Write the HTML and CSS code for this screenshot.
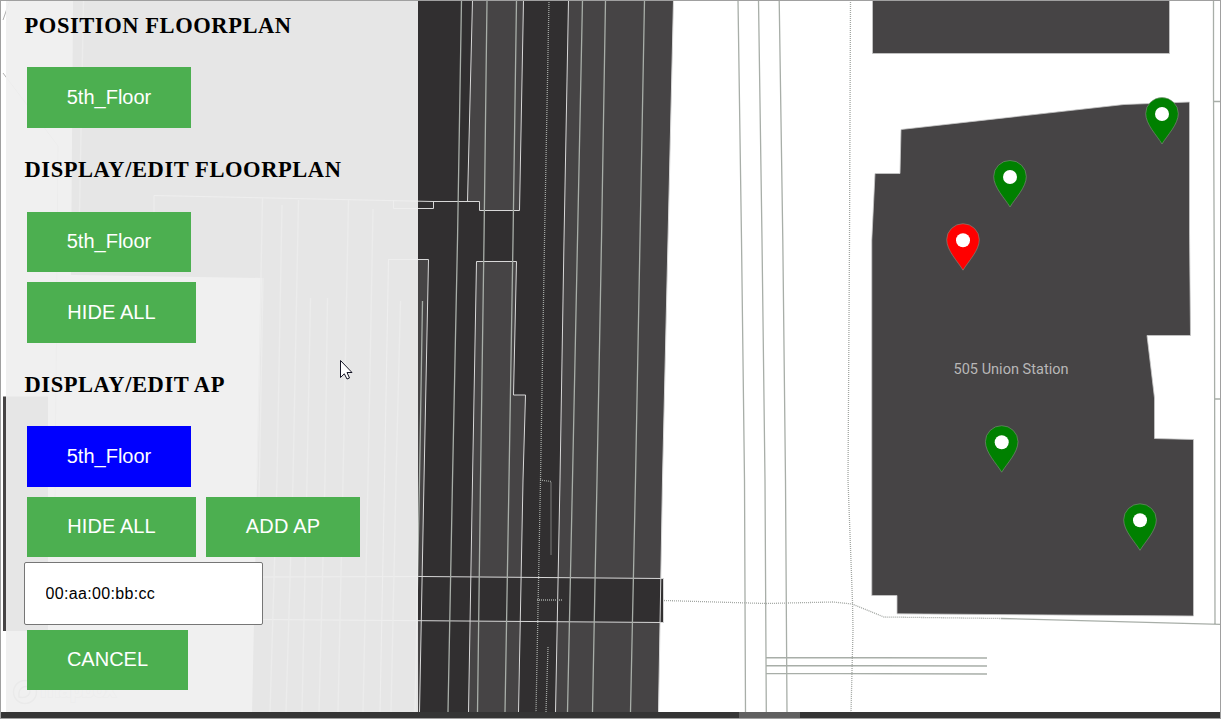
FILE: index.html
```
<!DOCTYPE html>
<html lang="en">
<head>
<meta charset="utf-8">
<title>Floorplan editor</title>
<link rel="stylesheet" href="styles.css">
</head>
<body>
<main class="window">
<svg class="map" viewBox="0 0 1221 719" width="1221" height="719">
  <defs>
    <g id="pin"><path d="M0 46.5C-5 38-16.300 27-16.300 16A16.300 16 0 0 1 16.300 16C16.300 27 5 38 0 46.5Z" stroke="#83917f" stroke-width=".6"/><circle cy="16.5" r="7" fill="#fff"/></g>
  </defs>
  <path class="block" d="M73 0H673.5L668 240L662.5 480L658.5 712H252L257 480L262 278L71 275Z"/>
  <path class="block" d="M3 396.5H48V631H3Z"/>
  <g class="dark">
    <path d="M418 0H472.5L467.5 201.5H479.5V210H519L523.5 0H568.5L564 240L560 480L555.5 712H518L523 480L525.5 395H513.5L516.500 261.500H476.500L473 480L468.500 712H419L424 480L428.500 259.500H418Z"/>
    <path d="M418 577L663.500 578.500V622.500L418 620.500Z"/>
  </g>
  <g class="edges">
    <path d="M472.500 0L467.500 201.500M523.500 0L519.500 210.500H479.500V201.500L433 201.500L154 195.500V220M433.500 201V208.500L393.500 208.500V200M568.500 0L564 240L560 480L555.500 712M388 259.500H428.500L424 480L419.500 712M388.500 259.500L384.500 480L380 712M476.500 261.500H516.500L513.500 395H525.500L523 480L518.500 712M476.500 261.500L472.500 480L468.500 712"/>
    <path d="M673.500 0L668 240L662.500 480L658.500 712M262 577L420 576.500L663.500 578.500V622.500L262 619.500"/>
  </g>
  <g class="rails">
    <path d="M461.500 0L457.500 240L452.500 480L448 712M487 0L484 240L480.500 480L477.500 712M516.500 0L513 240L509 480L505 712M582.500 0L577.500 240L572.500 480L567.500 712M605.500 0L601.500 240L597 480L592.500 712M644.500 0L640 240L635.500 480L630.500 712M422.500 301L419.500 480L415 712"/>
    <path d="M83.500 0L79.500 212M263 278L259 500M262.500 198L257 480M282 205L277 480L270 712M298.500 200L293 480L286 712M348.500 200L343 480L338 712M373 209L368 480L363 712M310.500 298L307 480L302 712M327.500 298L325 480L319 712M400.500 301L396 480L391 712"/>
    <path d="M738 0L741.500 240L744.500 480L745.500 712M758.500 0L762 240L765 480L766.300 712M779.200 0L782.800 240L785.500 480L787 712M766 657.500L987 658M766 665.500L987 666M766 673.300L987 674M1213.500 0V90L1214.500 320L1215 624M1214 101.500H1221M1215 399H1221M1001 618.500L1221 624.300"/>
  </g>
  <path class="walk" d="M3 20L10 0M3 73L58 146L55 500"/>
  <path class="paths" d="M549 0L544.500 240L540.500 480L536 712M540 480L551 481.500V555M537 600H563M548 647L546 712M850.500 0L849.500 240L848 480L852.500 602L853 630L851 712M664 600.500L766 603.500L833 602L852 604L884 617L1001 618.500"/>
  <g class="building">
    <path d="M872.500 0H1169.500V53.500H872.500Z"/>
    <path d="M901 129.500L1124 104.500L1189.500 102L1189.500 233L1190.500 335.500H1147L1154.500 398V438.500L1193.500 439.500V616L897 613.800V595.500H871.800V240L875 173.500H900Z"/>
  </g>
  <text class="place" x="953.500" y="374" textLength="115" lengthAdjust="spacingAndGlyphs">505 Union Station</text>
  <g fill="green"><use href="#pin" x="1162" y="97.500"/><use href="#pin" x="1010" y="160.500"/><use href="#pin" x="1001.700" y="425.700"/><use href="#pin" x="1140" y="503.800"/></g>
  <use href="#pin" x="963" y="223.700" fill="red"/>
</svg>
<svg class="logo" width="110" height="32"><circle cx="13" cy="13" r="11.500"/><path d="M7 18C6 10 11 6 17 8C20 15 15 20 7 18Z"/><text x="28" y="18" textLength="76">mapbox</text></svg>
<aside class="panel">
  <h2>POSITION FLOORPLAN</h2>
  <div class="row"><button class="btn floor tall">5th_Floor</button></div>
  <h2 class="next">DISPLAY/EDIT FLOORPLAN</h2>
  <div class="row"><button class="btn floor">5th_Floor</button></div>
  <div class="row stacked"><button class="btn hide tall">HIDE ALL</button></div>
  <h2 class="next">DISPLAY/EDIT AP</h2>
  <div class="row"><button class="btn floor tall active">5th_Floor</button></div>
  <div class="row stacked"><button class="btn hide">HIDE ALL</button><button class="btn add">ADD AP</button></div>
  <input class="mac" type="text" value="00:aa:00:bb:cc">
  <div class="row"><button class="btn cancel">CANCEL</button></div>
</aside>
<svg class="cursor" width="13" height="20"><path d="M.5.500V17.500L4.300 13.800L7 19L9.500 18L7 12.500H12Z"/></svg>
<footer class="scrollbar"><div class="thumb"></div></footer>
</main>
</body>
</html>
```
FILE: styles.css
```
* { box-sizing: border-box; }
body { margin: 0; overflow: hidden; background: #fff; }
.window { position: relative; width: 1221px; height: 719px; overflow: hidden; display: flex; flex-direction: column; }
.window::after { content: ""; position: absolute; inset: 0; border: 1px solid #a0a0a0; }
.map { position: absolute; inset: 0; }
.block, .building { fill: #464445; }
.dark { fill: #312f30; }
.building { stroke: #c8c8c8; stroke-width: .8; }
.edges { fill: none; stroke: #d8d8d8; stroke-width: 1; }
.rails { fill: none; stroke: #a8aea8; stroke-width: 1.3; }
.walk { fill: none; stroke: #b0b0b0; }
.paths { fill: none; stroke: #a2a6a2; stroke-width: 1.3; stroke-dasharray: 1 1; }
.place { font: 400 15.500px Roboto, sans-serif; fill: #b8b7b7; }
.panel { position: relative; width: 412px; height: 711px; margin: 1px 0 0 6px; padding: 12px 18px 0; background: rgba(239, 239, 239, .95); }
h2 { margin: 0 0 29px; padding-left: .5px; height: 25px; font: bold 22.500px/25px "Liberation Serif", serif; letter-spacing: .57px; color: #000; white-space: nowrap; }
.next { margin: 29px 0 30px; }
.stacked + .next { margin-bottom: 29px; }
.row { display: flex; gap: 10px; padding-left: 3px; }
.stacked { margin-top: 10px; }
.btn { height: 60px; border: 0; padding: 0 0 1px; background: #4caf50; color: #fff; font: 20px "Liberation Sans", Arial, sans-serif; }
.tall { height: 61px; }
.floor { width: 164px; }
.hide { width: 169px; letter-spacing: .1px; }
.add { width: 154px; letter-spacing: .2px; }
.cancel { width: 161px; }
.active { background: #00f; }
.mac { display: block; width: 239px; height: 63px; margin: 5px 0; padding: 0 20.500px; border: 1px solid #767676; border-radius: 2px; background: #fff; color: #000; font: 16px "Liberation Sans", Arial, sans-serif; letter-spacing: .33px; }
.logo { position: absolute; left: 12px; top: 679px; fill: none; stroke: #888; stroke-width: 1.500; }
.logo text { font: bold 21px "Open Sans", sans-serif; fill: #fff; stroke: #bbb; stroke-width: 2; paint-order: stroke; }
.cursor { position: absolute; left: 340px; top: 360px; fill: #fff; stroke: #151525; }
.scrollbar { height: 7px; padding-left: 739px; background: #353535; position: relative; }
.thumb { width: 61px; height: 7px; background: #606060; }
```
